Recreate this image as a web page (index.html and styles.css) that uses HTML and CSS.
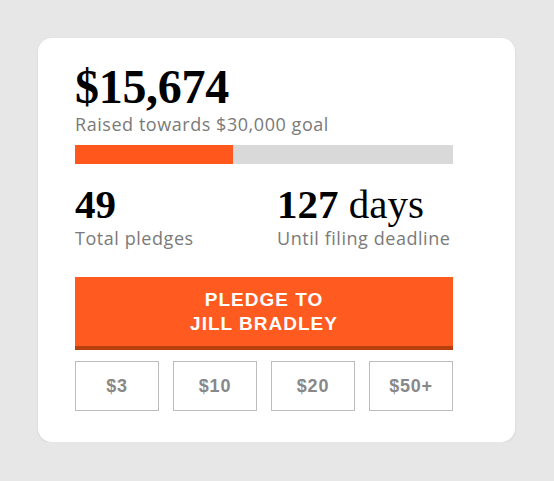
FILE: index.html
```html
<!DOCTYPE html>
<html>
<head>
<meta charset="utf-8">
<link rel="stylesheet" href="styles.css">
</head>
<body>
<div class="card">
  <div class="content">
    <div class="amount">$15,674</div>
    <div class="label">Raised towards $30,000 goal</div>
    <div class="bar"><div class="fill" style="width: 41.8%"></div></div>
    <div class="stats">
      <div class="stat stat-left">
        <div class="num"><b>49</b></div>
        <div class="label">Total pledges</div>
      </div>
      <div class="stat">
        <div class="num"><b>127</b> days</div>
        <div class="label">Until filing deadline</div>
      </div>
    </div>
    <button class="pledge">PLEDGE TO<br>JILL BRADLEY</button>
    <div class="amounts">
      <button class="amt">$3</button>
      <button class="amt">$10</button>
      <button class="amt">$20</button>
      <button class="amt">$50+</button>
    </div>
  </div>
</div>
</body>
</html>
```

FILE: styles.css
```css
html, body {
  margin: 0;
  padding: 0;
  background: #e7e7e7;
}
body {
  padding: 38px 0 0 38px;
  font-family: "Liberation Sans", Arial, sans-serif;
}
.card {
  width: 477px;
  height: 404px;
  box-sizing: border-box;
  background: #fff;
  border-radius: 14px;
  box-shadow: 0 1px 3px rgba(0,0,0,0.08);
  padding: 24px 0 0 37px;
}
.content {
  width: 378px;
}
.amount {
  font-family: "Liberation Serif", "Times New Roman", serif;
  font-weight: bold;
  font-size: 48px;
  line-height: 50px;
  color: #000;
  letter-spacing: -0.3px;
}
.label {
  font-family: "Open Sans", "Liberation Sans", sans-serif;
  font-size: 18px;
  line-height: 24px;
  color: #7a7a7a;
  letter-spacing: 0.55px;
  white-space: nowrap;
}
.bar {
  margin-top: 9px;
  height: 19px;
  background: #d9d9d9;
}
.fill {
  height: 100%;
  background: #ff571c;
}
.stats {
  display: flex;
  margin-top: 18px;
}
.stat-left {
  width: 202px;
}
.num {
  font-family: "Liberation Serif", "Times New Roman", serif;
  font-size: 41px;
  line-height: 44px;
  color: #000;
}
.num b {
  font-weight: bold;
}
.pledge {
  display: block;
  width: 100%;
  margin-top: 27px;
  height: 73px;
  border: none;
  border-bottom: 4px solid #b8400f;
  background: #ff5a1f;
  color: #fff;
  font-family: "Liberation Sans", Arial, sans-serif;
  font-weight: bold;
  font-size: 19px;
  line-height: 24px;
  letter-spacing: 1px;
  padding: 0;
}
.amounts {
  display: flex;
  gap: 14px;
  margin-top: 11px;
}
.amt {
  width: 84px;
  height: 50px;
  background: #fff;
  border: 1px solid #bdbdbd;
  color: #888;
  font-family: "Liberation Sans", Arial, sans-serif;
  font-weight: bold;
  font-size: 18px;
  letter-spacing: 0.8px;
  padding: 0;
}
```
